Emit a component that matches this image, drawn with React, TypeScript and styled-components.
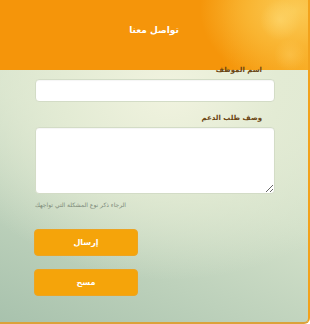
import styled, { createGlobalStyle } from 'styled-components';

const GlobalStyle = createGlobalStyle`
  html, body {
    margin: 0;
    padding: 0;
  }
  body {
    font-family: 'DejaVu Sans', 'Noto Sans', sans-serif;
  }
`;

function App() {
  return (
    <>
      <GlobalStyle />
      <Page>
        <Header>
          <Title>تواصل معنا</Title>
        </Header>
        <Form>
          <Label $first>اسم الموظف</Label>
          <Input type="text" />
          <Label>وصف طلب الدعم</Label>
          <TextArea />
          <Hint>الرجاء ذكر نوع المشكلة التي تواجهك</Hint>
          <Actions>
            <Button type="button">إرسال</Button>
            <Button type="reset">مسح</Button>
          </Actions>
        </Form>
      </Page>
    </>
  );
}

export default App;

const Page = styled.div`
  width: 310px;
  height: 324px;
  box-sizing: border-box;
  overflow: hidden;
  display: flex;
  flex-direction: column;
  border-right: 2px solid #f2a21c;
  border-bottom: 2px solid #dba23a;
  border-bottom-right-radius: 6px;
  background:
    radial-gradient(ellipse 240px 190px at 170px 90px, #f1f3df 0%, #e3ebd4 45%, rgba(226, 234, 211, 0) 100%),
    linear-gradient(205deg, #e8eed9 0%, #d2e0c9 50%, #a8c2ad 100%);
`;

const Header = styled.div`
  height: 70px;
  flex-shrink: 0;
  display: flex;
  align-items: center;
  justify-content: center;
  background:
    radial-gradient(circle 20px at 280px 20px, rgba(255, 226, 130, 0.45), rgba(255, 226, 130, 0)),
    radial-gradient(circle 16px at 290px 55px, rgba(255, 214, 110, 0.35), rgba(255, 214, 110, 0)),
    radial-gradient(ellipse 95px 75px at 295px 10px, #fbcb56 0%, #f9b532 50%, rgba(247, 160, 20, 0) 100%),
    linear-gradient(90deg, #f5950a 0%, #f5950a 72%, #f7a81e 100%);
`;

const Title = styled.h1`
  margin: 0 0 10px;
  font-size: 9px;
  font-weight: bold;
  color: #ffffff;
  direction: rtl;
`;

const Form = styled.form`
  direction: rtl;
  display: flex;
  flex-direction: column;
  width: 240px;
  margin-left: 35px;
`;

const Label = styled.label<{ $first?: boolean }>`
  margin: ${({ $first }) => ($first ? '-6px' : '10px')} 13px 3px 0;
  font-size: 7px;
  font-weight: bold;
  color: #6a4412;
  line-height: 12px;
`;

const fieldStyles = `
  box-sizing: border-box;
  width: 240px;
  background: #ffffff;
  border: 1px solid #d3dcc6;
  border-radius: 4px;
  box-shadow: inset 0 1px 1px rgba(0, 0, 0, 0.04);
  outline: none;
`;

const Input = styled.input`
  ${fieldStyles}
  height: 23px;
`;

const TextArea = styled.textarea`
  ${fieldStyles}
  height: 67px;
  resize: both;
  direction: ltr;
`;

const Hint = styled.p`
  margin: 6px 0 0;
  align-self: flex-end;
  font-size: 6px;
  color: #7d8a79;
  line-height: 10px;
`;

const Actions = styled.div`
  display: flex;
  flex-direction: column;
  align-items: flex-start;
  gap: 13px;
  margin-top: 19px;
  direction: ltr;
`;

const Button = styled.button`
  width: 104px;
  height: 27px;
  border: 1px solid #eca422;
  border-radius: 4px;
  background: #f5a40a;
  color: #ffffff;
  font-family: 'DejaVu Sans', 'Noto Sans', sans-serif;
  font-size: 8px;
  font-weight: bold;
  padding: 0;
  margin-left: -1px;
`;
